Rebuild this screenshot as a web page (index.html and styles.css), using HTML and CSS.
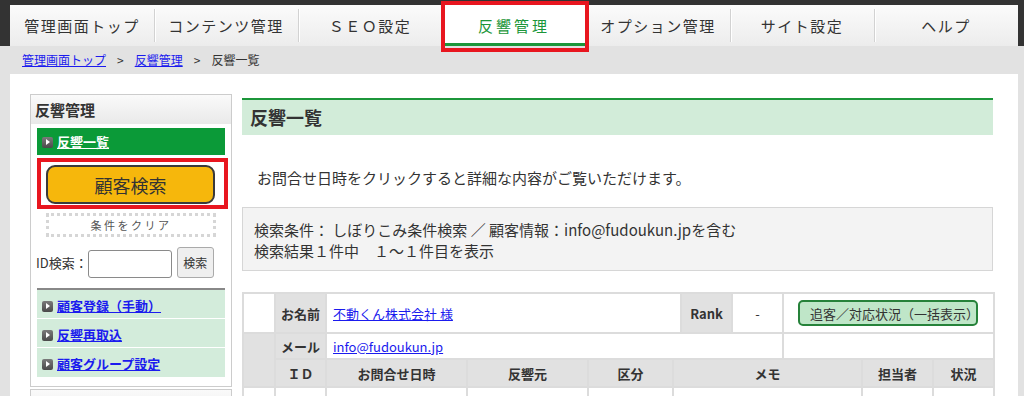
FILE: index.html
```html
<!DOCTYPE html>
<html lang="ja">
  <head>
    <meta charset="UTF-8" />
    <meta name="viewport" content="width=device-width, initial-scale=1.0" />
    <title>反響一覧</title>
    <link rel="stylesheet" href="styles.css">
  </head>
  <body>
    <header class="topbar">
      <ul class="gnav">
        <li><a href="#">管理画面トップ</a></li>
        <li><a href="#">コンテンツ管理</a></li>
        <li><a href="#">ＳＥＯ設定</a></li>
        <li class="active"><a href="#">反響管理</a><span class="mark mark-tab"></span></li>
        <li><a href="#">オプション管理</a></li>
        <li><a href="#">サイト設定</a></li>
        <li><a href="#">ヘルプ</a></li>
      </ul>
    </header>

    <div class="breadcrumb">
      <a href="#">管理画面トップ</a><span class="sep">&gt;</span><a href="#">反響管理</a><span class="sep">&gt;</span><span>反響一覧</span>
    </div>

    <div class="page">
      <aside class="sidebar">
        <div class="side-box">
          <div class="side-head">反響管理</div>
          <div class="side-body">
            <a href="#" class="side-current"><span class="arrow"></span>反響一覧</a>

            <div class="search-wrap">
              <button class="search-btn">顧客検索</button>
              <span class="mark mark-btn"></span>
            </div>
            <div class="clear-btn">条件をクリア</div>

            <div class="id-search">
              <label>ID検索：</label>
              <input type="text" />
              <button>検索</button>
            </div>

            <ul class="side-menu">
              <li><a href="#"><span class="arrow"></span>顧客登録（手動）</a></li>
              <li><a href="#"><span class="arrow"></span>反響再取込</a></li>
              <li><a href="#"><span class="arrow"></span>顧客グループ設定</a></li>
            </ul>
          </div>
        </div>
        <div class="side-box">
          <div class="side-head">物件管理</div>
        </div>
      </aside>

      <main class="main">
        <h1 class="title-bar">反響一覧</h1>
        <p class="lead">お問合せ日時をクリックすると詳細な内容がご覧いただけます。</p>

        <div class="cond">
          検索条件： しぼりこみ条件検索 ／ 顧客情報：info@fudoukun.jpを含む<br>
          検索結果１件中　１～１件目を表示
        </div>

        <table class="list">
          <colgroup>
            <col style="width:32px"><col style="width:51px"><col style="width:141px"><col style="width:121px">
            <col style="width:85px"><col style="width:8px"><col style="width:51px"><col style="width:51px">
            <col style="width:79px"><col style="width:71px"><col style="width:61px">
          </colgroup>
          <tr class="r-name">
            <td></td>
            <th>お名前</th>
            <td colspan="4"><a href="#">不動くん株式会社 様</a></td>
            <th>Rank</th>
            <td class="center">-</td>
            <td colspan="3"><button class="follow-btn">追客／対応状況（一括表示）</button></td>
          </tr>
          <tr class="r-mail">
            <th rowspan="2"></th>
            <th>メール</th>
            <td colspan="6"><a href="#">info@fudoukun.jp</a></td>
            <td colspan="3"></td>
          </tr>
          <tr class="r-head">
            <th>ＩＤ</th>
            <th>お問合せ日時</th>
            <th>反響元</th>
            <th>区分</th>
            <th colspan="4">メモ</th>
            <th>担当者</th>
            <th>状況</th>
          </tr>
          <tr class="r-data">
            <td></td>
            <td class="center">1024</td>
            <td class="center"><a href="#">2024/05/20 10:12</a></td>
            <td class="center">自社HP</td>
            <td class="center">売却</td>
            <td colspan="4"></td>
            <td class="center">-</td>
            <td class="center"><a href="#">未対応</a></td>
          </tr>
        </table>
      </main>
    </div>
  </body>
</html>
```

FILE: styles.css
```css
* {
  margin: 0;
  padding: 0;
  box-sizing: border-box;
}

body {
  background: #e2e2e2;
  color: #333;
  font-family: "Noto Sans CJK JP", "Noto Sans", sans-serif;
  overflow: hidden;
}

a {
  color: #1b1bee;
}

/* annotation frames */
.mark {
  position: absolute;
  border: 4px solid #e8161f;
  pointer-events: none;
}

/* global nav */
.topbar {
  background: #333;
  height: 46px;
  padding: 5px 6px 0 10px;
}

.gnav {
  list-style: none;
  display: flex;
  height: 41px;
  background: linear-gradient(#fbfbfb, #ececec);
}

.gnav li {
  flex: 1;
  position: relative;
  display: flex;
  align-items: center;
  justify-content: center;
}

.gnav li + li::before {
  content: "";
  position: absolute;
  left: 0;
  top: 4px;
  bottom: 4px;
  border-left: 1px solid #d2d2d2;
  border-right: 1px solid #fff;
}

.gnav a {
  color: #333;
  text-decoration: none;
  font-size: 15px;
  letter-spacing: 1.5px;
}

.gnav li.active {
  background: #fff;
  border-bottom: 3px solid #1c963a;
}

.gnav li.active::before,
.gnav li.active + li::before {
  display: none;
}

.gnav li.active a {
  color: #1c963a;
  letter-spacing: 3px;
  padding-top: 3px;
}

.mark-tab {
  top: -4px;
  left: -1px;
  right: -3px;
  bottom: -9px;
}

/* breadcrumb */
.breadcrumb {
  height: 28px;
  line-height: 28px;
  padding-left: 22px;
  font-size: 12px;
  color: #333;
}

.breadcrumb .sep {
  margin: 0 11px;
}

/* page */
.page {
  display: flex;
  gap: 10px;
  margin: 0 6px 0 10px;
  padding: 20px 25px 40px 20px;
  background: #fff;
}

/* sidebar */
.sidebar {
  width: 202px;
  flex-shrink: 0;
}

.side-box {
  border: 1px solid #ccc;
  background: #fff;
  padding-bottom: 9px;
  margin-bottom: 2px;
}

.side-head {
  height: 29px;
  line-height: 29px;
  padding-left: 4px;
  font-size: 15px;
  font-weight: 700;
  background: linear-gradient(#fafafa, #e9e9e9);
}

.side-body {
  padding: 4px 6px 0;
}

.arrow {
  display: inline-block;
  width: 11px;
  height: 11px;
  margin: 0 4px 0 5px;
  border-radius: 2px;
  background: linear-gradient(#7a7a7a, #4a4a4a);
  position: relative;
  vertical-align: -1px;
}

.arrow::after {
  content: "";
  position: absolute;
  left: 4px;
  top: 2px;
  border-left: 4px solid #fff;
  border-top: 3.5px solid transparent;
  border-bottom: 3.5px solid transparent;
}

.side-current {
  display: block;
  height: 27px;
  line-height: 27px;
  background: #0b9a38;
  color: #fff;
  font-size: 13px;
  font-weight: 700;
}

.search-wrap {
  position: relative;
  margin: 10px 10px 0 9px;
}

.search-btn {
  display: block;
  width: 100%;
  height: 39px;
  background: #f6b70c;
  border: 2px solid #3a3a3a;
  border-radius: 9px;
  color: #333;
  font-family: inherit;
  font-size: 18px;
}

.mark-btn {
  top: -7px;
  left: -9px;
  right: -13px;
  bottom: -5px;
}

.clear-btn {
  margin: 9px 9px 0;
  height: 24px;
  line-height: 18px;
  border: 3px dotted #d6d6d6;
  text-align: center;
  font-size: 11px;
  color: #555;
  letter-spacing: 2.5px;
}

.id-search {
  display: flex;
  align-items: center;
  margin-top: 10px;
  font-size: 13px;
}

.id-search label {
  white-space: nowrap;
  margin-left: -1px;
}

.id-search input {
  width: 84px;
  height: 28px;
  margin-top: 3px;
  border: 1px solid #8a8a8a;
  border-radius: 3px;
}

.id-search button {
  width: 37px;
  height: 31px;
  margin-left: 5px;
  background: #efefef;
  border: 1px solid #aaa;
  border-radius: 3px;
  font-family: inherit;
  font-size: 12px;
  color: #333;
}

.side-menu {
  list-style: none;
  margin-top: 10px;
  border-top: 2px solid #888;
}

.side-menu li {
  height: 29px;
  line-height: 28px;
  background: #d3ecdb;
  border-bottom: 1px solid #fff;
}

.side-menu li:last-child {
  border-bottom: none;
}

.side-menu a {
  font-size: 13px;
  font-weight: 700;
}

/* main */
.main {
  flex: 1;
  min-width: 0;
  padding-top: 4px;
}

.title-bar {
  height: 37px;
  line-height: 35px;
  border-top: 2px solid #1c963a;
  background: #d2ecd9;
  padding-left: 8px;
  font-size: 18px;
  font-weight: 700;
}

.lead {
  margin: 32px 0 0 15px;
  font-size: 15px;
  line-height: 22px;
}

.cond {
  margin-top: 18px;
  padding: 11px 10px 9px 11px;
  background: #f3f3f3;
  border: 1px solid #d6d6d6;
  font-size: 15px;
  line-height: 21px;
}

.list {
  margin-top: 21px;
  width: 100%;
  table-layout: fixed;
  border-collapse: collapse;
  font-size: 13px;
}

.list th,
.list td {
  border: 2px solid #dcdcdc;
  white-space: nowrap;
  overflow: hidden;
}

.list th {
  background: #e1e1e1;
  font-weight: 700;
}

.list td {
  padding-left: 6px;
}

.list td.center {
  text-align: center;
  padding-left: 0;
}

.r-name {
  height: 40px;
}

.r-mail {
  height: 26px;
}

.r-head {
  height: 28px;
}

.r-data {
  height: 30px;
}

.follow-btn {
  margin-left: 8px;
  width: 180px;
  height: 26px;
  background: #bfe6c8;
  border: 2px solid #26823a;
  border-radius: 5px;
  font-family: inherit;
  font-size: 13px;
  color: #333;
  text-align: left;
  padding-left: 10px;
}
```
